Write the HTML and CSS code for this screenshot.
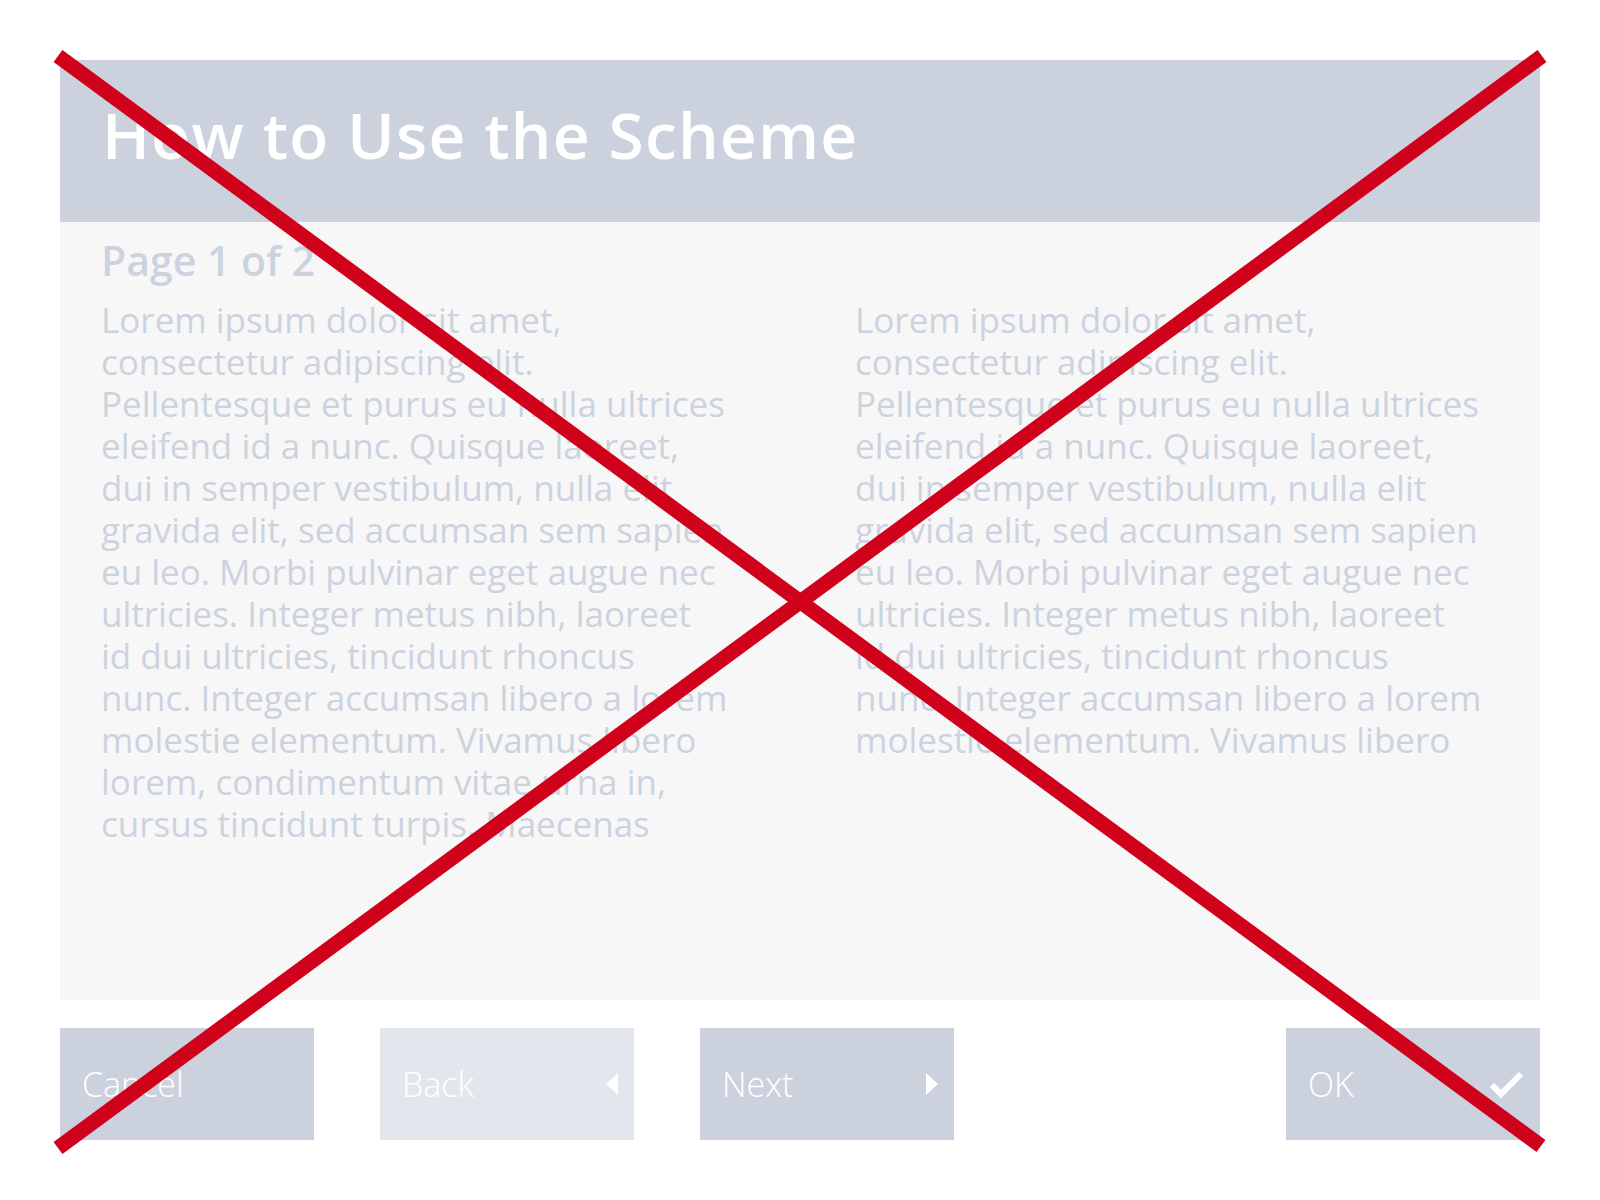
FILE: index.html
```html
<!DOCTYPE html>
<html>
<head>
<meta charset="utf-8">
<link rel="stylesheet" href="styles.css">
</head>
<body>
<div class="page">
  <header class="dialog-header">
    <h1 class="dialog-title">How to Use the Scheme</h1>
  </header>
  <main class="dialog-body">
    <h2 class="page-count">Page 1 of 2</h2>
    <div class="columns">
      <p class="col-text">Lorem ipsum dolor sit amet,<br>consectetur adipiscing elit.<br>Pellentesque et purus eu nulla ultrices<br>eleifend id a nunc. Quisque laoreet,<br>dui in semper vestibulum, nulla elit<br>gravida elit, sed accumsan sem sapien<br>eu leo. Morbi pulvinar eget augue nec<br>ultricies. Integer metus nibh, laoreet<br>id dui ultricies, tincidunt rhoncus<br>nunc. Integer accumsan libero a lorem<br>molestie elementum. Vivamus libero<br>lorem, condimentum vitae urna in,<br>cursus tincidunt turpis. Maecenas</p>
      <p class="col-text">Lorem ipsum dolor sit amet,<br>consectetur adipiscing elit.<br>Pellentesque et purus eu nulla ultrices<br>eleifend id a nunc. Quisque laoreet,<br>dui in semper vestibulum, nulla elit<br>gravida elit, sed accumsan sem sapien<br>eu leo. Morbi pulvinar eget augue nec<br>ultricies. Integer metus nibh, laoreet<br>id dui ultricies, tincidunt rhoncus<br>nunc. Integer accumsan libero a lorem<br>molestie elementum. Vivamus libero</p>
    </div>
  </main>
  <footer class="actions">
    <button class="btn">Cancel</button>
    <button class="btn btn-disabled">Back
      <svg class="btn-icon" width="12" height="22" viewBox="0 0 12 22"><path d="M12 0 L12 22 L0 11 Z" fill="#fff"/></svg>
    </button>
    <button class="btn">Next
      <svg class="btn-icon" width="12" height="22" viewBox="0 0 12 22"><path d="M0 0 L0 22 L12 11 Z" fill="#fff"/></svg>
    </button>
    <button class="btn btn-ok">OK
      <svg class="btn-icon" width="34" height="28" viewBox="0 0 34 28"><path d="M2 15 L11 24 L31 4" fill="none" stroke="#fff" stroke-width="6"/></svg>
    </button>
  </footer>
</div>
<svg class="cross" width="1600" height="1200" viewBox="0 0 1600 1200">
  <line x1="58" y1="56" x2="1541" y2="1146" stroke="#d0021b" stroke-width="15"/>
  <line x1="1542" y1="56" x2="58" y2="1148" stroke="#d0021b" stroke-width="15"/>
</svg>
</body>
</html>
```

FILE: styles.css
```css
html, body {
  margin: 0;
  padding: 0;
  background: #ffffff;
}
body {
  position: relative;
  width: 1600px;
  height: 1200px;
  overflow: hidden;
  font-family: "Open Sans", Lato, sans-serif;
}
.page {
  padding: 60px 60px 0 60px;
  display: flex;
  flex-direction: column;
}
.dialog-header {
  height: 162px;
  background: #cbd2de;
  display: flex;
  align-items: center;
  padding-left: 42px;
  padding-bottom: 12px;
  box-sizing: border-box;
}
.dialog-title {
  margin: 0;
  color: #ffffff;
  font-size: 64px;
  font-weight: 600;
  line-height: 1;
  letter-spacing: 1.2px;
}
.dialog-body {
  height: 778px;
  background: #f7f7f7;
  box-sizing: border-box;
  padding: 11px 40px 0 41px;
}
.page-count {
  margin: 0;
  color: #ccd3df;
  font-size: 41px;
  font-weight: 600;
  line-height: 54px;
}
.columns {
  display: grid;
  grid-template-columns: 690px 1fr;
  gap: 64px;
  margin-top: 12px;
}
.col-text {
  margin: 0;
  color: #ccd3df;
  font-size: 35px;
  font-weight: 500;
  line-height: 42px;
  white-space: nowrap;
}
.actions {
  display: flex;
  gap: 66px;
  margin-top: 28px;
}
.btn {
  width: 254px;
  height: 112px;
  border: 0;
  margin: 0;
  background: #cbd2de;
  color: #ffffff;
  font-family: "Open Sans", Lato, sans-serif;
  font-size: 34px;
  font-weight: 300;
  display: flex;
  align-items: center;
  justify-content: space-between;
  padding: 0 16px 0 22px;
  box-sizing: border-box;
}
.btn-disabled {
  background: #e3e7ed;
}
.btn-ok {
  margin-left: auto;
  padding-right: 16px;
}
.btn-icon {
  display: block;
}
.cross {
  position: absolute;
  left: 0;
  top: 0;
  pointer-events: none;
}
```
